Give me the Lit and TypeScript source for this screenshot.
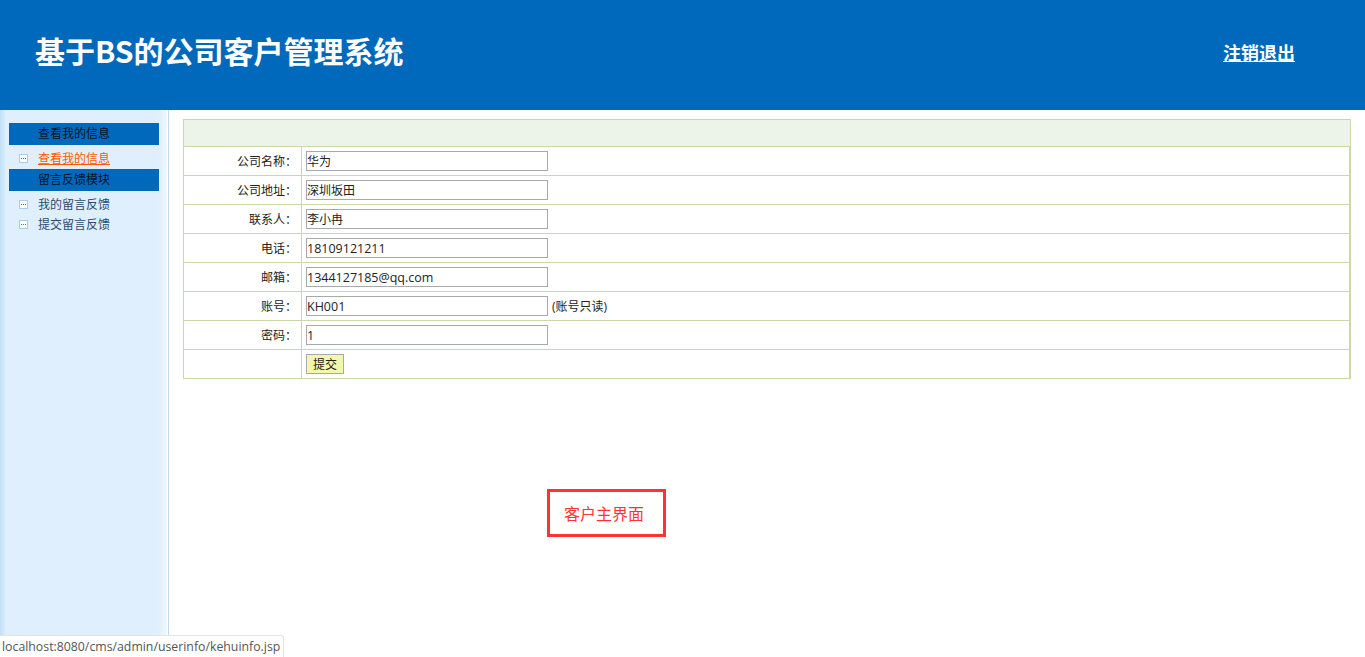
import { LitElement, html, css } from "lit";
import { customElement } from "lit/decorators.js";

@customElement("app-root")
export class AppRoot extends LitElement {
  static styles = css`
    :host { display: block; position: relative; height: 657px; overflow: hidden; background: #fff;
      font-family: "Open Sans", "Noto Sans CJK SC", sans-serif; font-size: 12px; color: #222; }
    .header { height: 110px; background: #0069bc; display: flex; align-items: flex-start; justify-content: space-between; }
    .title { margin: 28px 0 0 35px; font-family: "Noto Sans CJK SC", sans-serif; font-size: 30px; line-height: 44px; font-weight: 700; color: #fff; }
    .logout { margin: 40px 70px 0 0; font-family: "Noto Sans CJK SC", sans-serif; font-size: 18px; line-height: 24px; font-weight: 700; color: #fff; text-decoration: underline; }
    .body { display: flex; height: 547px; }
    .side { width: 169px; box-sizing: border-box; border-right: 1px solid #bddcf2; flex: none; padding: 13px 0 0 9px;
      background: linear-gradient(90deg, #bfe0f8 0, #dfeffd 6px, #dfeffd 158px, #eef7fe 166px, #fff 168px); }
    .group { width: 150px; height: 22px; background: #0069bc; color: #06121f; line-height: 22px; padding-left: 29px; box-sizing: border-box; }
    .item { display: flex; align-items: center; height: 20px; width: 150px; color: #2b4a6b; }
    .item.active { color: #ff5a00; text-decoration: underline; height: 24px; padding-top: 2px; box-sizing: border-box; }
    .first { margin-top: 3px; }
    .ico { width: 9px; height: 9px; box-sizing: border-box; border: 1px solid #a9cde8; background: #fff; margin: 0 10px; flex: none; display: flex; align-items: center; justify-content: center; }
    .ico svg { display: block; }
    .main { flex: 1; min-width: 0; padding: 9px 14px 0; }
    table { width: 1168px; border-collapse: collapse; table-layout: fixed; }
    td { border: 1px solid #cbd8a9; padding: 0; box-sizing: border-box; }
    tr { height: 29px; }
    tr.head { height: 27px; }
    tr.head td { background: #ecf3e9; }
    .lbl { text-align: right; padding: 0 4px 1px 0; color: #222; }
    .val { padding-left: 4px; color: #222; box-shadow: inset -1px 0 0 #cbd8a9; }
    .val input { width: 242px; height: 20px; box-sizing: border-box; border: 1px solid #a9a9a9; padding: 0; margin: 0; font: inherit; font-size: 12px; color: #222; vertical-align: middle; background: #fff; border-radius: 0; }
    .val input.latin { font-size: 12.5px; }
    .note { margin-left: 4px; vertical-align: middle; }
    .btn { width: 38px; height: 20px; box-sizing: border-box; border: 1px solid #a9a9a9; background: #f4f6ab; font: inherit; font-size: 12px; color: #222; padding: 0; display: block; }
    .red { margin: 110px 0 0 364px; width: 119px; height: 48px; box-sizing: border-box; border: 3px solid #ff3333; color: #ff3333; font-family: "Noto Sans CJK SC", sans-serif; font-size: 16px; line-height: 43px; padding-left: 14px; }
    .status { position: absolute; left: 0; bottom: 0; height: 22px; width: 284px; box-sizing: border-box; background: #fff; border: 1px solid #e4e4e4; border-left: 0; border-bottom: 0; border-top-right-radius: 3px; padding-left: 2px; font-family: "Open Sans", "Noto Sans", sans-serif; font-size: 12.3px; line-height: 21px; color: #555; white-space: nowrap; overflow: hidden; }
  `;

  private ico() {
    return html`<span class="ico"><svg width="5" height="1" viewBox="0 0 5 1"><rect width="1" height="1" fill="#2f7fc8"/><rect x="2" width="1" height="1" fill="#2f7fc8"/><rect x="4" width="1" height="1" fill="#2f7fc8"/></svg></span>`;
  }

  private row(label: string, value: string, note = "") {
    const latin = /^[\x00-\x7f]+$/.test(value);
    return html`<tr>
      <td class="lbl">${label}：</td>
      <td class="val"><input class=${latin ? "latin" : ""} .value=${value} />${note ? html`<span class="note">${note}</span>` : ""}</td>
    </tr>`;
  }

  render() {
    return html`
      <div class="header">
        <div class="title">基于BS的公司客户管理系统</div>
        <div class="logout">注销退出</div>
      </div>
      <div class="body">
        <div class="side">
          <div class="group">查看我的信息</div>
          <div class="item active">${this.ico()}<span>查看我的信息</span></div>
          <div class="group">留言反馈模块</div>
          <div class="item first">${this.ico()}<span>我的留言反馈</span></div>
          <div class="item">${this.ico()}<span>提交留言反馈</span></div>
        </div>
        <div class="main">
          <table>
            <colgroup><col style="width:118px" /><col /></colgroup>
            <tr class="head"><td colspan="2"></td></tr>
            ${this.row("公司名称", "华为")}
            ${this.row("公司地址", "深圳坂田")}
            ${this.row("联系人", "李小冉")}
            ${this.row("电话", "18109121211")}
            ${this.row("邮箱", "1344127185@qq.com")}
            ${this.row("账号", "KH001", "(账号只读)")}
            ${this.row("密码", "1")}
            <tr><td class="lbl"></td><td class="val"><button class="btn">提交</button></td></tr>
          </table>
          <div class="red">客户主界面</div>
        </div>
      </div>
      <div class="status">localhost:8080/cms/admin/userinfo/kehuinfo.jsp</div>
    `;
  }
}
